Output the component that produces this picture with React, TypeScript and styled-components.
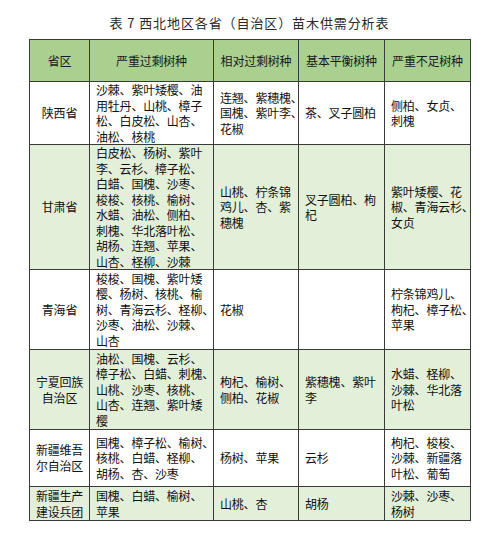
import * as React from 'react';
import styled, { createGlobalStyle } from 'styled-components';

const GlobalStyle = createGlobalStyle`
    body {
        margin: 0;
        background: #fff;
        font-family: "Noto Sans CJK SC", "Noto Sans", sans-serif;
        color: #111;
    }
`;

interface Region {
    name: string[],
    over: string[],
    relative: string[],
    balanced: string[],
    short: string[],
    height: number
}

// each cell keeps the line breaks of the printed table
const regions: Region[] = [
    {
        name: ['陕西省'],
        over: ['沙棘、紫叶矮樱、油', '用牡丹、山桃、樟子', '松、白皮松、山杏、', '油松、核桃'],
        relative: ['连翘、紫穗槐、', '国槐、紫叶李、', '花椒'],
        balanced: ['茶、叉子圆柏'],
        short: ['侧柏、女贞、', '刺槐'],
        height: 63
    },
    {
        name: ['甘肃省'],
        over: [
            '白皮松、杨树、紫叶', '李、云杉、樟子松、', '白蜡、国槐、沙枣、', '梭梭、核桃、榆树、',
            '水蜡、油松、侧柏、', '刺槐、华北落叶松、', '胡杨、连翘、苹果、', '山杏、柽柳、沙棘'
        ],
        relative: ['山桃、柠条锦', '鸡儿、杏、紫', '穗槐'],
        balanced: ['叉子圆柏、枸', '杞'],
        short: ['紫叶矮樱、花', '椒、青海云杉、', '女贞'],
        height: 124
    },
    {
        name: ['青海省'],
        over: ['梭梭、国槐、紫叶矮', '樱、杨树、核桃、榆', '树、青海云杉、柽柳、', '沙枣、油松、沙棘、', '山杏'],
        relative: ['花椒'],
        balanced: [],
        short: ['柠条锦鸡儿、', '枸杞、樟子松、', '苹果'],
        height: 80
    },
    {
        name: ['宁夏回族', '自治区'],
        over: ['油松、国槐、云杉、', '樟子松、白蜡、刺槐、', '山桃、沙枣、核桃、', '山杏、连翘、紫叶矮', '樱'],
        relative: ['枸杞、榆树、', '侧柏、花椒'],
        balanced: ['紫穗槐、紫叶', '李'],
        short: ['水蜡、柽柳、', '沙棘、华北落', '叶松'],
        height: 80
    },
    {
        name: ['新疆维吾', '尔自治区'],
        over: ['国槐、樟子松、榆树、', '核桃、白蜡、柽柳、', '胡杨、杏、沙枣'],
        relative: ['杨树、苹果'],
        balanced: ['云杉'],
        short: ['枸杞、梭梭、', '沙棘、新疆落', '叶松、葡萄'],
        height: 57
    },
    {
        name: ['新疆生产', '建设兵团'],
        over: ['国槐、白蜡、榆树、', '苹果'],
        relative: ['山桃、杏'],
        balanced: ['胡杨'],
        short: ['沙棘、沙枣、', '杨树'],
        height: 34
    }
];

const columns = [60, 124, 85, 86, 86];

const Page = styled.div`
    width: 441px;
    padding: 16px 0 0 29px;
`;

const Title = styled.h1`
    margin: 0 0 9px;
    text-align: center;
    font-size: 13px;
    font-weight: 400;
    line-height: 14px;
    letter-spacing: 0.9px;
    color: #2a2a2a;
`;

const Table = styled.table`
    width: 441px;
    table-layout: fixed;
    border-collapse: collapse;
    border: 1.5px solid #333;
    font-size: 12px;
    letter-spacing: -0.2px;
`;

const Col = styled.col<{ $width: number }>`
    width: ${p => p.$width}px;
`;

const HeadRow = styled.tr`
    height: 42px;
    background: #a9d08e;

    th {
        border: 1px solid #3a3a3a;
        font-weight: 400;
        text-align: center;
        color: #1a1a1a;
        padding: 0;
        white-space: nowrap;
    }
`;

const Row = styled.tr<{ $shaded: boolean, $height: number }>`
    height: ${p => p.$height}px;
    background: ${p => (p.$shaded ? '#e2efd9' : '#fff')};
`;

const Cell = styled.td<{ $center?: boolean }>`
    border: 1px solid #3a3a3a;
    padding: 0 0 0 ${p => (p.$center ? 0 : 6)}px;
    vertical-align: middle;
    text-align: ${p => (p.$center ? 'center' : 'left')};
    line-height: ${p => (p.$center ? 16 : 15.5)}px;
    overflow: visible;
`;

const Line = styled.div`
    white-space: nowrap;
`;

const Lines = ({ lines }: { lines: string[] }) => (
    <>
        {lines.map((line, i) => <Line key={i}>{line}</Line>)}
    </>
);

const App = () => (
    <Page>
        <GlobalStyle />
        <Title>表 7 西北地区各省（自治区）苗木供需分析表</Title>
        <Table>
            <colgroup>
                {columns.map((w, i) => <Col key={i} $width={w} />)}
            </colgroup>
            <thead>
                <HeadRow>
                    <th>省区</th>
                    <th>严重过剩树种</th>
                    <th>相对过剩树种</th>
                    <th>基本平衡树种</th>
                    <th>严重不足树种</th>
                </HeadRow>
            </thead>
            <tbody>
                {regions.map((r, i) => (
                    <Row key={r.name.join('')} $shaded={i % 2 === 1} $height={r.height}>
                        <Cell $center><Lines lines={r.name} /></Cell>
                        <Cell><Lines lines={r.over} /></Cell>
                        <Cell><Lines lines={r.relative} /></Cell>
                        <Cell><Lines lines={r.balanced} /></Cell>
                        <Cell><Lines lines={r.short} /></Cell>
                    </Row>
                ))}
            </tbody>
        </Table>
    </Page>
);

export default App;
